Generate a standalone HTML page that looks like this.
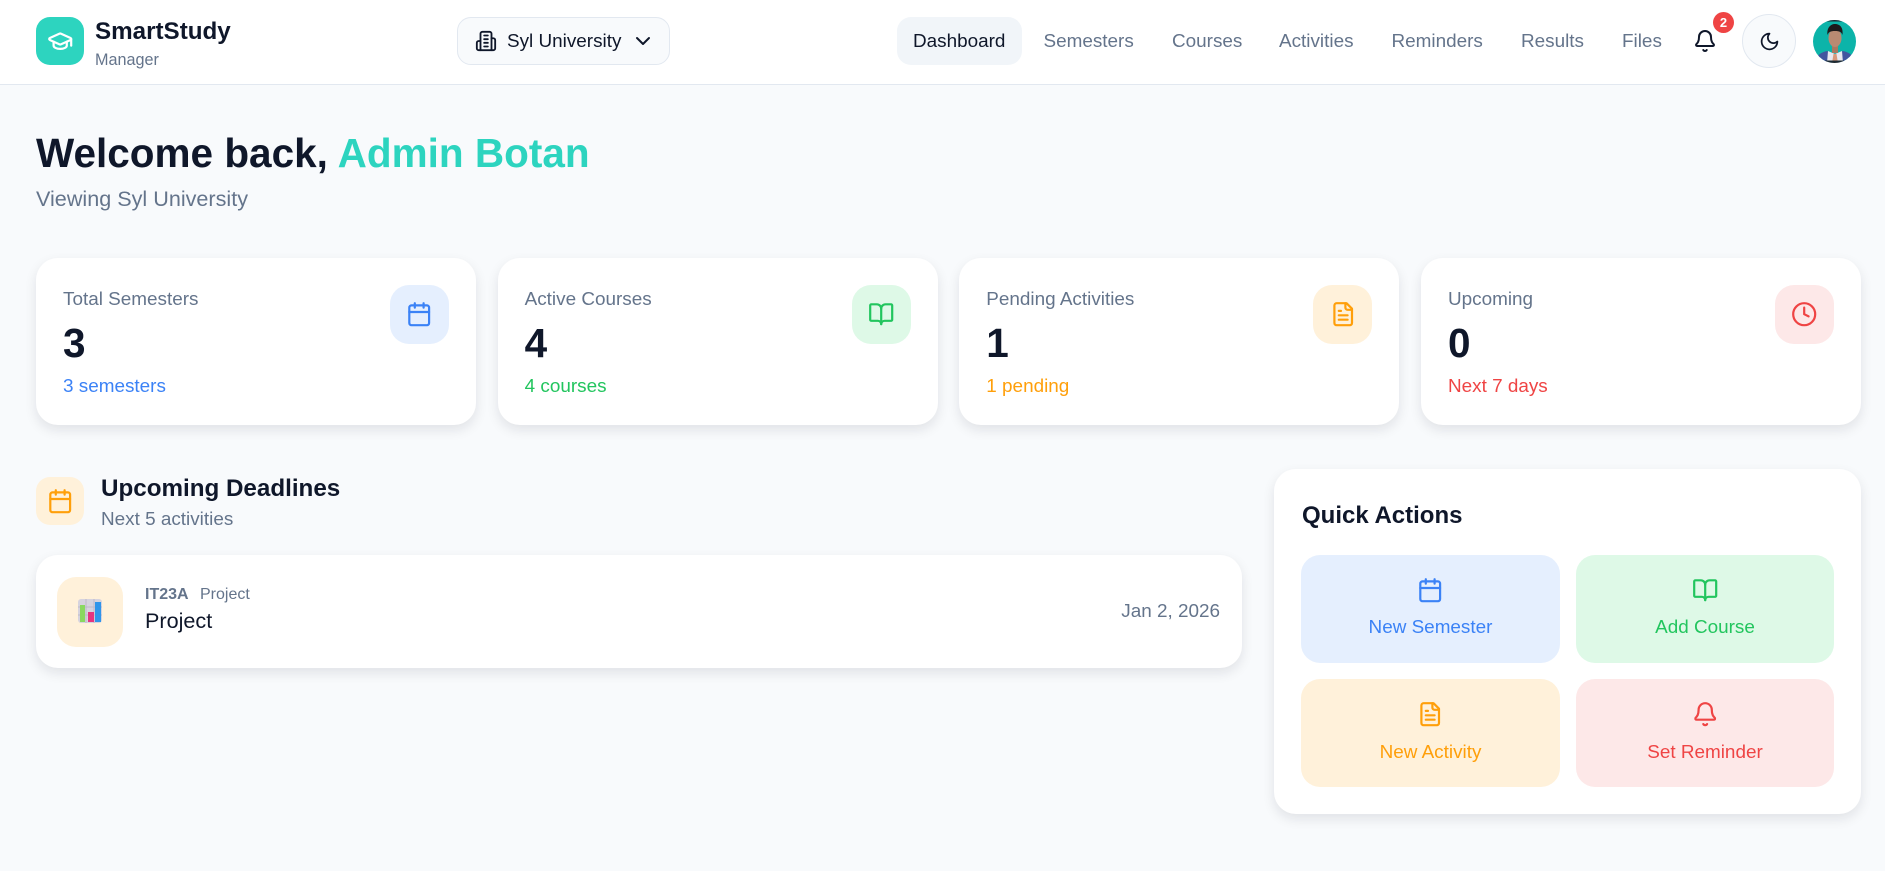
<!DOCTYPE html>
<html lang="en"><head><meta charset="utf-8"><title>SmartStudy Manager</title>
<style>
*{box-sizing:border-box;margin:0;padding:0}
html,body{width:1885px;height:871px;overflow:hidden;background:#f8fafc;font-family:"Liberation Sans",Arial,sans-serif;color:#0f172a}
.a{position:absolute;white-space:nowrap}
.t{position:absolute;white-space:nowrap;height:30px;line-height:30px}
svg{display:block;fill:none;stroke:currentColor;stroke-width:2;stroke-linecap:round;stroke-linejoin:round}
.nav{position:absolute;left:0;top:0;width:1885px;height:85px;background:#fff;border-bottom:1px solid #e2e8f0}
.link{font-size:18.9px;color:#64748b;top:27px}
.card{position:absolute;background:#fff;border-radius:22px;box-shadow:0 5px 12px rgba(15,23,42,.1)}
.stat{top:258px;width:440px;height:167px}
.box{position:absolute;left:354px;top:27px;width:59px;height:59px;border-radius:19px;display:flex;align-items:center;justify-content:center}
.lb{left:27px;top:27px;font-size:18.9px;color:#64748b}
.val{left:27px;top:61px;height:48px;line-height:48px;font-size:40.5px;font-weight:700}
.sb{left:27px;top:114px;font-size:18.9px}
.btn{position:absolute;width:259px;height:108px;border-radius:19px}
.btn svg{position:absolute;left:116px;top:22px}
.btn .t{left:0;width:100%;text-align:center;top:58px;font-size:18.9px}
.bl{color:#3b82f6}.gr{color:#22c55e}.or{color:#ff9f0a}.rd{color:#ef4444}
.bbl{background:#e5effe}.bgr{background:#def9e7}.bor{background:#fff1da}.brd{background:#fde8e8}
</style></head><body>
<div class="nav"></div>
<div class="a" style="left:36px;top:17px;width:48px;height:48px;border-radius:14px;background:#2dd4bf;color:#fff;display:flex;align-items:center;justify-content:center">
<svg width="26.4" height="26.4" viewBox="0 0 24 24"><path d="M21.42 10.922a1 1 0 0 0-.019-1.838L12.83 5.18a2 2 0 0 0-1.66 0L2.6 9.08a1 1 0 0 0 0 1.832l8.57 3.908a2 2 0 0 0 1.66 0z"/><path d="M22 10v6"/><path d="M6 12.5V16a6 3 0 0 0 12 0v-3.5"/></svg></div>
<div class="t" style="left:95px;top:17px;font-size:24.2px;font-weight:700">SmartStudy</div>
<div class="t" style="left:95px;top:45px;font-size:16.2px;color:#64748b">Manager</div>

<div class="a" style="left:457px;top:17px;width:213px;height:48px;border-radius:14px;background:#f8fafc;border:1px solid #e2e8f0"></div>
<div class="a" style="left:475px;top:30px;color:#0f172a"><svg width="22" height="22" viewBox="0 0 24 24"><path d="M6 22V4a2 2 0 0 1 2-2h8a2 2 0 0 1 2 2v18Z"/><path d="M6 12H4a2 2 0 0 0-2 2v6a2 2 0 0 0 2 2h2"/><path d="M18 9h2a2 2 0 0 1 2 2v9a2 2 0 0 1-2 2h-2"/><path d="M10 6h4"/><path d="M10 10h4"/><path d="M10 14h4"/><path d="M10 18h4"/></svg></div>
<div class="t" style="left:507px;top:27px;font-size:18.9px">Syl University</div>
<div class="a" style="left:631px;top:29px"><svg width="24" height="24" viewBox="0 0 24 24"><path d="m6 9 6 6 6-6"/></svg></div>

<div class="a" style="left:897px;top:17px;width:125px;height:48px;border-radius:14px;background:#f1f5f9"></div>
<div class="t link" style="left:913px;color:#0f172a">Dashboard</div>
<div class="t link" style="left:1043.5px">Semesters</div>
<div class="t link" style="left:1172px">Courses</div>
<div class="t link" style="left:1279px">Activities</div>
<div class="t link" style="left:1391.5px">Reminders</div>
<div class="t link" style="left:1521px">Results</div>
<div class="t link" style="left:1622px">Files</div>
<div class="a" style="left:1693px;top:29px"><svg width="24" height="24" viewBox="0 0 24 24"><path d="M10.268 21a2 2 0 0 0 3.464 0"/><path d="M3.262 15.326A1 1 0 0 0 4 17h16a1 1 0 0 0 .74-1.673C19.41 13.956 18 12.499 18 8A6 6 0 0 0 6 8c0 4.499-1.411 5.956-2.738 7.326"/></svg></div>
<div class="a" style="left:1713px;top:12px;width:21px;height:21px;border-radius:50%;background:#ef4444;color:#fff;font-size:13px;font-weight:700;line-height:21px;text-align:center">2</div>
<div class="a" style="left:1742px;top:14px;width:54px;height:54px;border-radius:50%;background:#f8fafc;border:1px solid #e2e8f0;display:flex;align-items:center;justify-content:center"><svg width="21" height="21" viewBox="0 0 24 24"><path d="M12 3a6 6 0 0 0 9 9 9 9 0 1 1-9-9Z"/></svg></div>
<div class="a" style="left:1813px;top:20px;width:43px;height:43px;border-radius:50%;overflow:hidden;background:#0cb4a9">
<svg width="43" height="43" viewBox="0 0 43 43" style="stroke:none"><rect width="43" height="1.5" fill="#1b2a33"/><path d="M3 43c0-7 3-10 11-12l8 3 8-3c8 2 11 5 11 12z" fill="#41559f"/><path d="M15 31l7 3 7-3 1 12H14z" fill="#e8e8ee"/><path d="M20.5 34h3l1.5 9h-6z" fill="#d9987a"/><rect x="19" y="25" width="6" height="8" fill="#a87a62"/><ellipse cx="22" cy="18" rx="6.5" ry="9" fill="#b98a72"/><path d="M14.5 15c-1-7 3-11 7.5-11s8.500 3 7.500 11c-1-3-3-4-7.500-4s-6.500 1-7.500 4z" fill="#1d1a1c"/><rect y="40.500" width="43" height="2.500" fill="#1b2a33"/></svg></div>

<div class="a" style="left:36px;top:128px;height:50px;line-height:50px;font-size:40.5px;font-weight:700">Welcome back, <span style="color:#2dd4bf">Admin Botan</span></div>
<div class="t" style="left:36px;top:184px;font-size:21.6px;color:#64748b">Viewing Syl University</div>

<div class="card stat" style="left:36px"><div class="t lb">Total Semesters</div><div class="t val">3</div><div class="t sb bl">3 semesters</div>
<div class="box bbl bl"><svg width="26.4" height="26.4" viewBox="0 0 24 24"><path d="M8 2v4"/><path d="M16 2v4"/><rect x="3" y="4" width="18" height="18" rx="2"/><path d="M3 10h18"/></svg></div></div>
<div class="card stat" style="left:497.65px"><div class="t lb">Active Courses</div><div class="t val">4</div><div class="t sb gr">4 courses</div>
<div class="box bgr gr"><svg width="26.4" height="26.4" viewBox="0 0 24 24"><path d="M12 7v14"/><path d="M3 18a1 1 0 0 1-1-1V4a1 1 0 0 1 1-1h5a4 4 0 0 1 4 4 4 4 0 0 1 4-4h5a1 1 0 0 1 1 1v13a1 1 0 0 1-1 1h-6a3 3 0 0 0-3 3 3 3 0 0 0-3-3z"/></svg></div></div>
<div class="card stat" style="left:959.3px"><div class="t lb">Pending Activities</div><div class="t val">1</div><div class="t sb or">1 pending</div>
<div class="box bor or"><svg width="26.4" height="26.4" viewBox="0 0 24 24"><path d="M15 2H6a2 2 0 0 0-2 2v16a2 2 0 0 0 2 2h12a2 2 0 0 0 2-2V7Z"/><path d="M14 2v4a2 2 0 0 0 2 2h4"/><path d="M10 9H8"/><path d="M16 13H8"/><path d="M16 17H8"/></svg></div></div>
<div class="card stat" style="left:1421px"><div class="t lb">Upcoming</div><div class="t val">0</div><div class="t sb rd">Next 7 days</div>
<div class="box brd rd"><svg width="26.4" height="26.4" viewBox="0 0 24 24"><circle cx="12" cy="12" r="10"/><path d="M12 6v6l4 2"/></svg></div></div>

<div class="a bor or" style="left:36px;top:477px;width:48px;height:48px;border-radius:14px;display:flex;align-items:center;justify-content:center"><svg width="26.4" height="26.4" viewBox="0 0 24 24"><path d="M8 2v4"/><path d="M16 2v4"/><rect x="3" y="4" width="18" height="18" rx="2"/><path d="M3 10h18"/></svg></div>
<div class="t" style="left:101px;top:474px;font-size:24.2px;font-weight:700">Upcoming Deadlines</div>
<div class="t" style="left:101px;top:505px;font-size:18.9px;color:#64748b">Next 5 activities</div>

<div class="card" style="left:36px;top:555px;width:1206px;height:113px">
<div class="a bor" style="left:21px;top:22px;width:66px;height:70px;border-radius:19px"></div>
<svg class="a" style="left:42px;top:44px;stroke:none" width="24" height="24" viewBox="0 0 24 24"><rect width="24" height="24" rx="3" fill="#d6d3de"/><path d="M0 8h24M0 16h24M8 0v24M16 0v24" stroke="#bdb8c8" stroke-width="1"/><rect x="2" y="6" width="5" height="17" fill="#8ad860"/><rect x="10" y="13" width="6" height="10" fill="#e5347f"/><rect x="17" y="3" width="6" height="20" fill="#2f95ea"/></svg>
<div class="t" style="left:109px;top:25px;font-size:16px;font-weight:700;color:#64748b">IT23A</div>
<div class="t" style="left:164px;top:25px;font-size:16px;color:#64748b">Project</div>
<div class="t" style="left:109px;top:51px;font-size:21.6px">Project</div>
<div class="t" style="right:22px;top:42px;font-size:18.9px;color:#64748b">Jan 2, 2026</div>
</div>

<div class="card" style="left:1274px;top:469px;width:587px;height:345px"></div>
<div class="t" style="left:1302px;top:501px;font-size:24px;font-weight:700">Quick Actions</div>
<div class="btn bbl bl" style="left:1301px;top:555px"><svg width="26.4" height="26.4" viewBox="0 0 24 24"><path d="M8 2v4"/><path d="M16 2v4"/><rect x="3" y="4" width="18" height="18" rx="2"/><path d="M3 10h18"/></svg><div class="t">New Semester</div></div>
<div class="btn bgr gr" style="left:1576px;top:555px;width:258px"><svg width="26.4" height="26.4" viewBox="0 0 24 24"><path d="M12 7v14"/><path d="M3 18a1 1 0 0 1-1-1V4a1 1 0 0 1 1-1h5a4 4 0 0 1 4 4 4 4 0 0 1 4-4h5a1 1 0 0 1 1 1v13a1 1 0 0 1-1 1h-6a3 3 0 0 0-3 3 3 3 0 0 0-3-3z"/></svg><div class="t">Add Course</div></div>
<div class="btn bor or" style="left:1301px;top:679px"><svg width="26.4" height="26.4" viewBox="0 0 24 24"><path d="M15 2H6a2 2 0 0 0-2 2v16a2 2 0 0 0 2 2h12a2 2 0 0 0 2-2V7Z"/><path d="M14 2v4a2 2 0 0 0 2 2h4"/><path d="M10 9H8"/><path d="M16 13H8"/><path d="M16 17H8"/></svg><div class="t" style="top:59px">New Activity</div></div>
<div class="btn brd rd" style="left:1576px;top:679px;width:258px"><svg width="26.4" height="26.4" viewBox="0 0 24 24"><path d="M10.268 21a2 2 0 0 0 3.464 0"/><path d="M3.262 15.326A1 1 0 0 0 4 17h16a1 1 0 0 0 .74-1.673C19.41 13.956 18 12.499 18 8A6 6 0 0 0 6 8c0 4.499-1.411 5.956-2.738 7.326"/></svg><div class="t" style="top:59px">Set Reminder</div></div>
</body></html>
